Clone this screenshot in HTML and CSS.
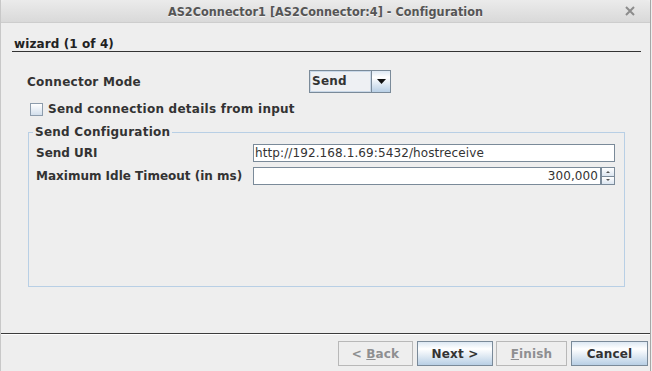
FILE: index.html
```html
<!DOCTYPE html>
<html lang="en">
	<head>
		<meta charset="utf-8" />
		<meta name="viewport" content="width=device-width, initial-scale=1.0" />
		<title>AS2Connector1 - Configuration</title>
		<link rel="stylesheet" href="styles.css">
	</head>

	<body>
		<div class="window">
			<div class="titlebar">
				<span></span>
				<span class="title">AS2Connector1 [AS2Connector:4] - Configuration</span>
				<span class="close">
					<svg width="10" height="10" viewBox="0 0 10 10">
						<path d="M1 1 L9 9 M9 1 L1 9" stroke="#8c8c8c" stroke-width="2" />
					</svg>
				</span>
			</div>

			<div class="content">
				<div class="wizard">wizard (1 of 4)</div>

				<div class="form">
					<div class="mode-row">
						<span class="mode-label">Connector Mode</span>
						<div class="combo">
							<span class="combo-value">Send</span>
							<span class="combo-arrow">
								<svg width="9" height="5" viewBox="0 0 9 5">
									<polygon points="0,0 9,0 4.5,5" fill="#111" />
								</svg>
							</span>
						</div>
					</div>

					<div class="check-row">
						<span class="checkbox"></span>
						<span>Send connection details from input</span>
					</div>

					<fieldset class="group">
						<legend>Send Configuration</legend>
						<div class="field-row">
							<span class="field-label">Send URI</span>
							<div class="text">http://192.168.1.69:5432/hostreceive</div>
						</div>
						<div class="field-row">
							<span class="field-label">Maximum Idle Timeout (in ms)</span>
							<div class="spinner">
								<div class="text num">300,000</div>
								<div class="spin-btns">
									<span class="spin up"></span>
									<span class="spin down"></span>
								</div>
							</div>
						</div>
					</fieldset>
				</div>
			</div>

			<div class="footer">
				<button class="btn btn-back" disabled>&lt; <u>B</u>ack</button>
				<button class="btn btn-next">Next &gt;</button>
				<button class="btn btn-finish" disabled><u>F</u>inish</button>
				<button class="btn btn-cancel">Cancel</button>
			</div>
		</div>
	</body>
</html>
```

FILE: styles.css
```css
* {
	box-sizing: border-box;
}

html,
body {
	margin: 0;
}

body {
	background: #eeeeee;
	font-family: "DejaVu Sans", sans-serif;
	font-size: 12px;
	color: #333333;
}

.window {
	width: 651px;
	height: 371px;
	display: flex;
	flex-direction: column;
	border-left: 1px solid #c8c8c8;
	border-right: 1px solid #a6a6a6;
}

.titlebar {
	flex: none;
	height: 23px;
	display: grid;
	grid-template-columns: 1fr auto 1fr;
	align-items: center;
	background: linear-gradient(#ebebeb, #d9d9d9);
	border-bottom: 1px solid #cdcdcd;
	border-radius: 4px 4px 0 0;
}

.title {
	font-weight: bold;
	font-size: 12.5px;
	font-stretch: condensed;
	letter-spacing: 0.05px;
	color: #555555;
	text-shadow: 0 1px #f2f2f2;
}

.close {
	justify-self: end;
	display: flex;
	margin-right: 15px;
}

.content {
	flex: 1;
}

.wizard {
	margin: 0 9px 0 11px;
	padding: 14px 0 0 2px;
	line-height: 14px;
	font-weight: bold;
	letter-spacing: 0.1px;
	color: #222222;
	border-bottom: 1px solid #333333;
}

.form {
	padding: 18px 0 0 26px;
	font-weight: bold;
	letter-spacing: 0.25px;
}

.mode-row {
	display: flex;
	align-items: center;
	height: 23px;
}

.mode-label {
	width: 282px;
}

.combo {
	display: flex;
	width: 82px;
	height: 23px;
	border: 1px solid #7a8a99;
}

.combo-value {
	flex: 1;
	padding-left: 2px;
	line-height: 21px;
	background: #eef0f3;
	box-shadow: inset 0 0 0 1px #c9d8e8;
}

.combo-arrow {
	width: 19px;
	border-left: 1px solid #7a8a99;
	background: linear-gradient(#dde8f3, #ffffff 30%, #b8cfe5);
	display: flex;
	align-items: center;
	justify-content: center;
}

.check-row {
	display: flex;
	align-items: center;
	height: 16px;
	margin: 8px 0 0 3px;
	gap: 5px;
}

.checkbox {
	width: 13px;
	height: 13px;
	border: 1px solid #8d9cac;
	background: linear-gradient(#ffffff, #d3dfec);
}

.group {
	width: 597px;
	margin: 8px 0 0 1px;
	border: 1px solid #b8cfe5;
	padding: 5px 9px 101px 7px;
}

.group legend {
	padding: 0 2px;
	margin-left: -3px;
	line-height: 14px;
}

.field-row {
	display: flex;
	height: 18px;
}

.field-row + .field-row {
	margin-top: 5px;
}

.field-label {
	width: 217px;
	line-height: 18px;
	letter-spacing: 0;
}

.text {
	flex: 1;
	border: 1px solid #7a8a99;
	background: #ffffff;
	padding: 0 2px 0 1px;
	line-height: 16px;
	font-weight: normal;
	letter-spacing: 0.1px;
	color: #333333;
	white-space: nowrap;
}

.spinner {
	flex: 1;
	display: flex;
}

.num {
	text-align: right;
}

.spin-btns {
	width: 14px;
	display: flex;
	flex-direction: column;
}

.spin {
	flex: 1;
	border: 1px solid #7a8a99;
	background: linear-gradient(#ffffff, #dbe5f0);
	display: flex;
	align-items: center;
	justify-content: center;
}

.spin.down {
	border-top: none;
}

.spin.up::after,
.spin.down::after {
	content: "";
	border-left: 2px solid transparent;
	border-right: 2px solid transparent;
}

.spin.up::after {
	border-bottom: 2px solid #555555;
}

.spin.down::after {
	border-top: 2px solid #555555;
}

.footer {
	flex: none;
	height: 38px;
	border-top: 1px solid #3c3c3c;
	box-shadow: inset 0 1px #ffffff;
	display: flex;
	justify-content: flex-end;
	align-items: flex-start;
	gap: 4px;
	padding: 7px 2px 0 0;
}

.btn {
	height: 25px;
	padding: 0;
	border: 1px solid #7a8a99;
	border-radius: 0;
	background: linear-gradient(#dde8f3, #ffffff 30%, #b8cfe5);
	font-family: "DejaVu Sans", sans-serif;
	font-size: 12px;
	font-weight: bold;
	letter-spacing: 0.15px;
	color: #333333;
}

.btn:disabled {
	background: #eeeeee;
	border-color: #b8b8b8;
	color: #8e8f91;
}

.btn-back {
	width: 75px;
}

.btn-next {
	width: 76px;
}

.btn-finish {
	width: 71px;
	margin-left: -1px;
}

.btn-cancel {
	width: 77px;
}
```
